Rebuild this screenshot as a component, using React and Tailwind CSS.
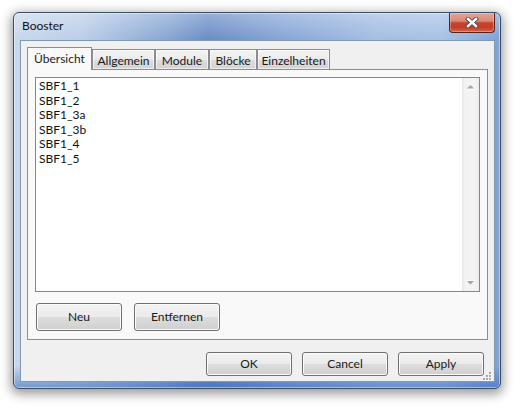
import React from 'react'

const FONT = "font-['Segoe_UI','Lato',sans-serif]"

const BTN =
  'flex items-center justify-center rounded-[3px] border border-[#707070] bg-[linear-gradient(180deg,#f3f3f3_0%,#ebebeb_50%,#dddddd_51%,#cfcfcf_100%)] shadow-[inset_0_0_0_1px_#fbfbfb] text-[12px] text-[#1a1a1a]'

const ITEMS = ['SBF1_1', 'SBF1_2', 'SBF1_3a', 'SBF1_3b', 'SBF1_4', 'SBF1_5']

function Arrow({ down }) {
  return (
    <svg width="9" height="6" viewBox="0 0 9 6">
      {down ? (
        <>
          <path d="M1 1 H8 L4.5 4.5 Z" fill="#a6a6a6" />
          <path d="M1 0.5 H8" stroke="#ffffff" strokeWidth="1" />
        </>
      ) : (
        <>
          <path d="M1 4.5 H8 L4.5 1 Z" fill="#a6a6a6" />
          <path d="M1 5.5 H8" stroke="#ffffff" strokeWidth="1" />
        </>
      )}
    </svg>
  )
}

function CloseButton() {
  return (
    <div className="flex h-[20px] w-[46px] items-center justify-center rounded-b-[4px] border border-t-0 border-[#5b2317] bg-[linear-gradient(180deg,#e3a496_0%,#d98a79_42%,#c6452e_52%,#c23d27_75%,#d3654f_100%)] shadow-[inset_0_0_0_1px_rgba(255,255,255,0.3)]">
      <svg width="14" height="11" viewBox="0 0 14 11">
        <path d="M3 2 L11 9 M11 2 L3 9" stroke="#4a4a4a" strokeWidth="4.2" strokeLinecap="square" />
        <path d="M3 2 L11 9 M11 2 L3 9" stroke="#ffffff" strokeWidth="2.4" strokeLinecap="square" />
      </svg>
    </div>
  )
}

function Grip() {
  const dots = [
    [6, 0],
    [3, 3],
    [6, 3],
    [0, 6],
    [3, 6],
    [6, 6],
  ]
  return (
    <svg width="9" height="9" viewBox="0 0 9 9" className="absolute bottom-[0px] right-[2px]">
      {dots.map(([x, y], i) => (
        <g key={i}>
          <rect x={x + 1} y={y + 1} width="2" height="2" fill="#ffffff" />
          <rect x={x} y={y} width="2" height="2" fill="#a9a9a9" />
        </g>
      ))}
    </svg>
  )
}

export default function App() {
  return (
    <div className={`h-[409px] w-[520px] bg-white pl-[13px] pt-[12px] ${FONT}`}>
      {/* window frame */}
      <div className="flex h-[377px] w-[488px] flex-col rounded-[6px] border border-[#3b4c63] bg-[image:linear-gradient(180deg,rgba(255,255,255,0.3)_0%,rgba(255,255,255,0)_7%,rgba(0,0,0,0)_94%,rgba(50,100,185,0.55)_100%),linear-gradient(90deg,#c8d8ec_0%,#bacee8_14%,#86a5d3_32%,#6a8dc6_40%,#86a6d7_55%,#a3bde3_74%,#a8c2e5_88%,#7da2d8_100%)] pb-[6px] pl-[6px] pr-[5px] shadow-[inset_0_0_0_1px_rgba(255,255,255,0.45),0_3px_11px_2px_rgba(0,0,0,0.4)]">
        <div className="flex h-[27px] items-start justify-between">
          <span className="mt-[6px] pl-[2px] text-[12px] leading-[14px] text-[#111]">Booster</span>
          <CloseButton />
        </div>

        {/* client area */}
        <div className="relative flex flex-1 flex-col border border-[#8297b0] bg-[#f0f0f0] pt-[6px]">
          <div className="flex h-[22px] items-end pl-[6px] text-[12px] text-[#1a1a1a]">
            <div className="relative z-10 -mb-px flex h-[23px] w-[65px] items-start justify-center border border-b-0 border-[#898c95] bg-[#f9f9f9] pt-[3px] leading-[15px]">
              Übersicht
            </div>
            {[
              ['Allgemein', 'w-[63px]'],
              ['Module', 'w-[54px]'],
              ['Blöcke', 'w-[48px]'],
              ['Einzelheiten', 'w-[73px]'],
            ].map(([t, w]) => (
              <div
                key={t}
                className={`flex h-[20px] ${w} items-start justify-center border border-b-0 border-[#898c95] bg-[linear-gradient(180deg,#f3f3f3_0%,#ebebeb_50%,#dddddd_51%,#d3d3d3_100%)] pt-[3px] leading-[15px] shadow-[inset_0_0_0_1px_rgba(255,255,255,0.6)]`}
              >
                {t}
              </div>
            ))}
          </div>

          {/* tab panel */}
          <div className="mx-[6px] flex h-[271px] flex-col border border-[#898c95] bg-[#f9f9f9] p-[7px]">
            <div className="flex h-[215px] border border-[#828790] bg-white">
              <div className="flex-1 pl-[3px] pt-px text-[12px] leading-[14.6px] text-[#111]">
                {ITEMS.map((s) => (
                  <div key={s}>{s}</div>
                ))}
              </div>
              <div className="flex w-[17px] flex-col justify-between bg-[linear-gradient(90deg,#e6e6e6_0%,#f2f2f2_15%,#f4f4f4_80%,#ebebeb_100%)]">
                <div className="flex h-[17px] items-center justify-center">
                  <Arrow />
                </div>
                <div className="flex h-[17px] items-center justify-center">
                  <Arrow down />
                </div>
              </div>
            </div>
            <div className="mt-[11px] flex gap-[12px] pl-px">
              <div className={`${BTN} h-[28px] w-[86px]`}>Neu</div>
              <div className={`${BTN} h-[28px] w-[86px]`}>Entfernen</div>
            </div>
          </div>

          <div className="mt-[12px] flex justify-end gap-[10px] pr-[10px]">
            <div className={`${BTN} h-[24px] w-[86px]`}>OK</div>
            <div className={`${BTN} h-[24px] w-[86px]`}>Cancel</div>
            <div className={`${BTN} h-[24px] w-[86px]`}>Apply</div>
          </div>
          <Grip />
        </div>
      </div>
    </div>
  )
}
